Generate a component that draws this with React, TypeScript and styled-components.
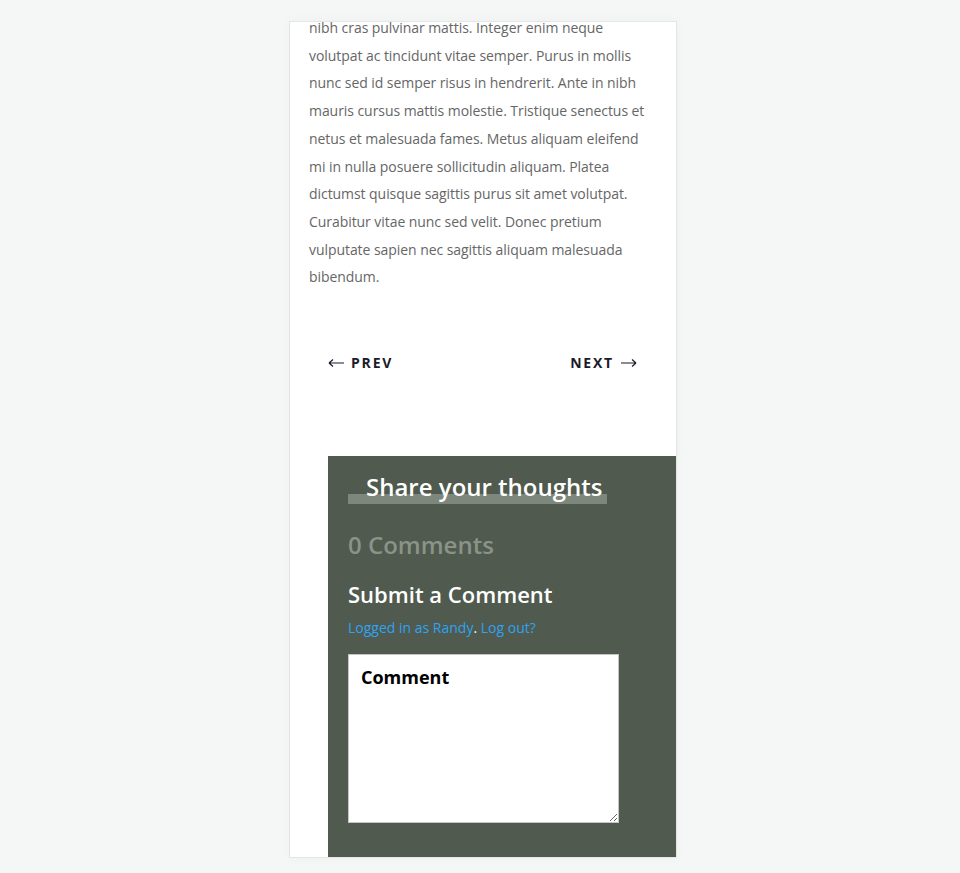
import styled, { createGlobalStyle } from "styled-components";

const GlobalStyle = createGlobalStyle`
  html, body {
    margin: 0;
    padding: 0;
    background: #f5f7f7;
    font-family: "Open Sans", "Liberation Sans", sans-serif;
  }
`;

const Page = styled.div`
  display: flex;
  justify-content: center;
  padding: 21px 0 15px 6px;
`;

const Card = styled.article`
  width: 386px;
  height: 835px;
  background: #fff;
  border: 1px solid #e4e6e6;
  box-shadow: 0 0 12px rgba(0, 0, 0, 0.03);
  overflow: hidden;
  display: flex;
  flex-direction: column;
`;

const Body = styled.p`
  margin: -8px 0 0;
  padding: 0 22px 0 19px;
  font-size: 14px;
  line-height: 27.72px;
  letter-spacing: -0.06px;
  color: #666;
`;

const Nav = styled.nav`
  display: flex;
  justify-content: space-between;
  padding: 60px 39px 0 38px;
`;

const NavLink = styled.a`
  display: flex;
  align-items: center;
  gap: 7px;
  font-size: 14px;
  font-weight: 700;
  letter-spacing: 1.8px;
  color: #1b1b2a;
  text-decoration: none;
  line-height: 24px;
`;

const Arrow = styled.svg`
  display: block;
  width: 16px;
  height: 10px;
  stroke: #1b1b2a;
  stroke-width: 1.2;
  fill: none;
`;

const Comments = styled.section`
  margin: 81px 0 0 38px;
  flex: 1;
  background: #505a4e;
  padding: 15px 20px 0;
  display: flex;
  flex-direction: column;
  align-items: flex-start;
`;

const Title = styled.h2`
  position: relative;
  margin: 0;
  padding: 0 5px 0 18px;
  font-size: 24px;
  font-weight: 600;
  line-height: 32px;
  color: #fff;
  z-index: 0;

  &::after {
    content: "";
    position: absolute;
    left: 0;
    right: 0;
    bottom: -1px;
    height: 10px;
    background: #7e877c;
    z-index: -1;
  }
`;

const Count = styled.h3`
  margin: 26px 0 0;
  font-size: 24px;
  font-weight: 600;
  line-height: 32px;
  color: #8b9389;
`;

const Submit = styled.h3`
  margin: 18px 0 0;
  font-size: 22px;
  font-weight: 600;
  line-height: 30px;
  color: #fff;
`;

const LoggedIn = styled.p`
  margin: 7px 0 0;
  font-size: 14px;
  line-height: 24px;
  color: #fff;
`;

const Link = styled.a`
  color: #2ea3f2;
  text-decoration: none;
`;

const Field = styled.label`
  position: relative;
  margin-top: 14px;
  display: block;
`;

const FieldLabel = styled.span`
  position: absolute;
  top: 11px;
  left: 13px;
  font-size: 18px;
  font-weight: 700;
  color: #000;
`;

const TextArea = styled.textarea`
  display: block;
  box-sizing: border-box;
  width: 271px;
  height: 169px;
  border: 1px solid #c4c6c4;
  border-radius: 0;
  background: #fff;
  margin: 0;
  outline: none;
`;

const LeftArrow = () => (
  <Arrow viewBox="0 0 16 10">
    <path d="M1 5h15M1 5l4-3.5M1 5l4 3.5" />
  </Arrow>
);

const RightArrow = () => (
  <Arrow viewBox="0 0 16 10">
    <path d="M0 5h15M15 5l-4-3.5M15 5l-4 3.5" />
  </Arrow>
);

const App = () => {
  return (
    <Page>
      <GlobalStyle />
      <Card>
        <Body>
          nibh cras pulvinar mattis. Integer enim neque volutpat ac tincidunt
          vitae semper. Purus in mollis nunc sed id semper risus in hendrerit.
          Ante in nibh mauris cursus mattis molestie. Tristique senectus et
          netus et malesuada fames. Metus aliquam eleifend mi in nulla posuere
          sollicitudin aliquam. Platea dictumst quisque sagittis purus sit amet
          volutpat. Curabitur vitae nunc sed velit. Donec pretium vulputate
          sapien nec sagittis aliquam malesuada bibendum.
        </Body>
        <Nav>
          <NavLink href="#">
            <LeftArrow />
            <span>PREV</span>
          </NavLink>
          <NavLink href="#">
            <span>NEXT</span>
            <RightArrow />
          </NavLink>
        </Nav>
        <Comments>
          <Title>Share your thoughts</Title>
          <Count>0 Comments</Count>
          <Submit>Submit a Comment</Submit>
          <LoggedIn>
            <Link href="#">Logged in as Randy</Link>. <Link href="#">Log out?</Link>
          </LoggedIn>
          <Field>
            <FieldLabel>Comment</FieldLabel>
            <TextArea />
          </Field>
        </Comments>
      </Card>
    </Page>
  );
};

export default App;
